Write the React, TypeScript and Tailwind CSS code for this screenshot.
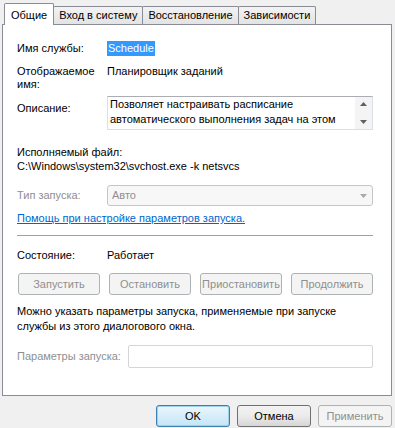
import React from "react";

const dis = "text-[#8f8f8f]";

function Tab({ label, active }: { label: string; active?: boolean }) {
    if (active) {
        return (
            <div className="h-[22px] px-[6px] pt-[4px] bg-white border border-b-0 border-[#898c95] rounded-t-[2px] leading-[15px]">
                {label}
            </div>
        );
    }
    return (
        <div className="h-[18px] mb-px -ml-px px-[5px] pt-[1px] leading-[15px] bg-gradient-to-b from-[#f3f3f3] to-[#e3e3e3] border border-b-0 border-[#898c95] rounded-t-[2px]">
            {label}
        </div>
    );
}

function SmallButton({ label }: { label: string }) {
    return (
        <div className={"w-[82px] h-[22px] flex items-center justify-center border border-[#adb2b5] rounded-[3px] bg-[#f4f4f4] " + dis}>
            {label}
        </div>
    );
}

function DialogButton({ label, focused, disabled }: { label: string; focused?: boolean; disabled?: boolean }) {
    let cls = "w-[74px] h-[22px] flex items-center justify-center rounded-[3px] border ";
    if (disabled) cls += "border-[#adb2b5] bg-[#f4f4f4] " + dis;
    else if (focused) cls += "border-[#3c7fb1] bg-gradient-to-b from-[#eaf6fd] to-[#c4e5f6] shadow-[inset_0_0_0_1px_#9fd0ec]";
    else cls += "border-[#707070] bg-gradient-to-b from-[#f2f2f2] via-[#ebebeb] to-[#d6d6d6]";
    return <div className={cls}>{label}</div>;
}

export default function App() {
    return (
        <div className="w-[395px] h-[428px] bg-[#f0f0f0] text-[11px] leading-[15px] text-black font-['Liberation_Sans',Arial,sans-serif] overflow-hidden">
            {/* tabs */}
            <div className="flex items-end h-[25px] pl-[4px] relative z-10">
                <Tab label="Общие" active />
                <Tab label="Вход в систему" />
                <Tab label="Восстановление" />
                <Tab label="Зависимости" />
            </div>

            {/* page */}
            <div className="-mt-px mx-[2px] w-[390px] h-[372px] bg-white border border-[#898c95] pl-[14px] pr-[18px] flex flex-col">
                <div className="flex mt-[16px]">
                    <div className="w-[90px]">Имя службы:</div>
                    <span className="bg-[#3399ff] text-white px-px">Schedule</span>
                </div>

                <div className="flex mt-[9px] leading-[13px]">
                    <div className="w-[90px]">Отображаемое<br />имя:</div>
                    <div>Планировщик заданий</div>
                </div>

                <div className="flex mt-[5px]">
                    <div className="w-[90px] mt-[5px]">Описание:</div>
                    <div className="flex-1 h-[34px] flex border border-[#dbdfe6] border-t-[#abadb3]">
                        <div className="flex-1 pl-[2px] overflow-hidden whitespace-nowrap">
                            Позволяет настраивать расписание<br />автоматического выполнения задач на этом
                        </div>
                        <div className="w-[17px] bg-[#f4f4f4] flex flex-col items-center justify-between py-[5px]">
                            <svg width="7" height="4" viewBox="0 0 7 4"><path d="M0 4 L3.5 0 L7 4 Z" fill="#606060" /></svg>
                            <svg width="7" height="4" viewBox="0 0 7 4"><path d="M0 0 L3.5 4 L7 0 Z" fill="#606060" /></svg>
                        </div>
                    </div>
                </div>

                <div className="mt-[15px] leading-[14px]">
                    Исполняемый файл:<br />C:\Windows\system32\svchost.exe -k netsvcs
                </div>

                <div className="flex items-center mt-[12px]">
                    <div className={"w-[90px] " + dis}>Тип запуска:</div>
                    <div className={"flex-1 h-[21px] flex items-center justify-between pl-[4px] pr-[5px] border border-[#c5c5c5] rounded-[3px] bg-[#f7f7f7] " + dis}>
                        <span>Авто</span>
                        <svg width="7" height="4" viewBox="0 0 7 4"><path d="M0 0 L3.5 4 L7 0 Z" fill="#a8a8a8" /></svg>
                    </div>
                </div>

                <div className="mt-[5px] text-[#0066cc] underline">Помощь при настройке параметров запуска.</div>

                <div className="mt-[9px] border-t border-[#a0a0a0]" />

                <div className="flex mt-[12px]">
                    <div className="w-[90px]">Состояние:</div>
                    <div>Работает</div>
                </div>

                <div className="flex justify-between mt-[10px] pl-px">
                    <SmallButton label="Запустить" />
                    <SmallButton label="Остановить" />
                    <SmallButton label="Приостановить" />
                    <SmallButton label="Продолжить" />
                </div>

                <div className="mt-[9px]">
                    Можно указать параметры запуска, применяемые при запуске<br />службы из этого диалогового окна.
                </div>

                <div className="flex items-center mt-[11px]">
                    <div className={"w-[111px] " + dis}>Параметры запуска:</div>
                    <div className="flex-1 h-[23px] border border-[#d5d5d5] rounded-[2px] bg-white" />
                </div>
            </div>

            {/* dialog buttons */}
            <div className="flex justify-end gap-[7px] pr-[3px] mt-[9px]">
                <DialogButton label="OK" focused />
                <DialogButton label="Отмена" />
                <DialogButton label="Применить" disabled />
            </div>
        </div>
    );
}
